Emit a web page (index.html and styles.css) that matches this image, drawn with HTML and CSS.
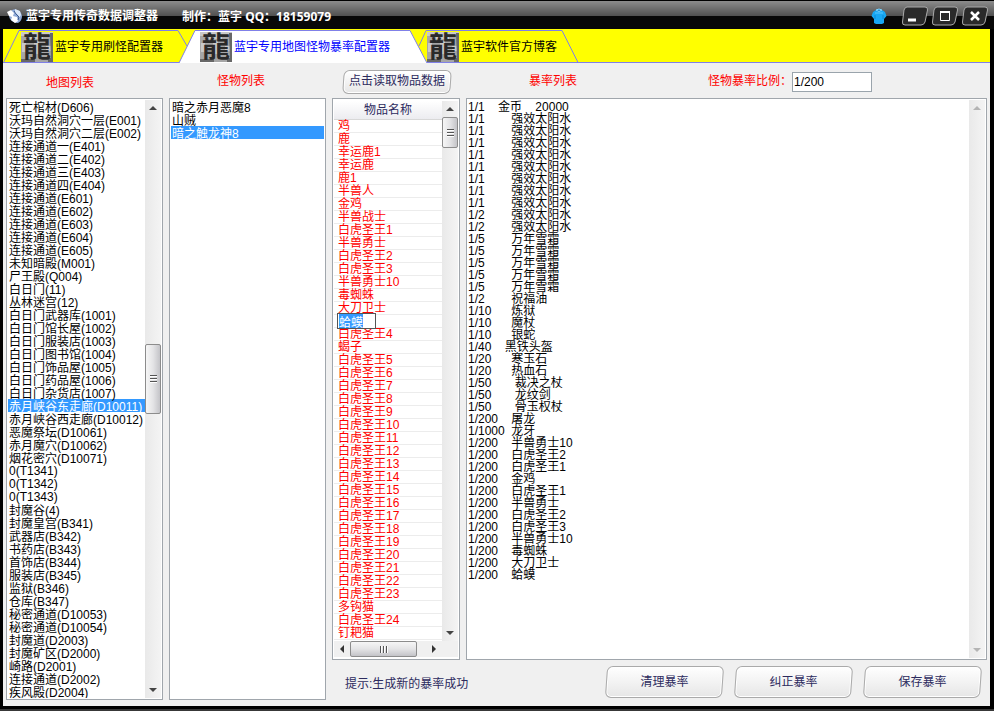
FILE: index.html
```html
<!DOCTYPE html>
<html lang="zh-CN">
<head>
    <meta charset="UTF-8">
    <title>蓝宇专用传奇数据调整器</title>
    <link rel="stylesheet" href="styles.css">
</head>
<body>
    <!-- Title bar -->
    <header class="titlebar">
        <svg class="app-icon" width="16" height="16" viewBox="0 0 16 16">
            <path d="M3 4Q6 0 10 2Q14 3 15 8Q15 13 11 15Q6 15 3 11Q1 7 3 4Z" fill="#8fa9d6"/>
            <path d="M0 4L4 2L7 5L6 8L10 9L11 13L8 15L4 12L5 9L2 8Z" fill="#fff"/>
            <path d="M8 1L13 3L14 7L12 10L11 7L8 5Z" fill="#dce8f8"/>
            <path d="M7 3L9 6L12 9L11 12" fill="none" stroke="#38588f"/>
        </svg>
        <h1>蓝宇专用传奇数据调整器</h1>
        <span class="author">制作：蓝宇 QQ：18159079</span>
        <div class="window-buttons">
            <button class="skin" aria-label="换肤">
                <svg width="16" height="17" viewBox="0 0 16 17">
                    <path d="M5 2H11L14 4L15.500 8L13 11V15L11 16H5L3 15V11L0.500 8L2 4Z" fill="#18a8f4"/>
                    <path d="M5 2Q8 0 11 2Q8 5 5 2Z" fill="#0b78c0" stroke="#7fd6ff"/>
                    <path d="M4 7V11M12 7V11" stroke="#0b88d4"/>
                    <path d="M4 5H12" stroke="#5cc8ff"/>
                </svg>
            </button>
            <button class="win" aria-label="最小化">
                <svg width="28" height="20" viewBox="0 0 28 20">
                    <path d="M6 1H24Q27 1 26.500 4L24 16Q23 19 20 19H4Q1 19 1.500 16L3 4Q4 1 6 1Z" fill="#2a2a2a" stroke="#aaa"/>
                    <path d="M7 14H15" stroke="#fff" stroke-width="3"/>
                </svg>
            </button>
            <button class="win" aria-label="最大化">
                <svg width="28" height="20" viewBox="0 0 28 20">
                    <path d="M6 1H24Q27 1 26.500 4L24 16Q23 19 20 19H4Q1 19 1.500 16L3 4Q4 1 6 1Z" fill="#2a2a2a" stroke="#aaa"/>
                    <path d="M9.500 5.500H18.500V14.500H9.500Z" fill="none" stroke="#fff"/>
                    <path d="M9 6H19" stroke="#fff" stroke-width="2"/>
                </svg>
            </button>
            <button class="win" aria-label="关闭">
                <svg width="28" height="20" viewBox="0 0 28 20">
                    <path d="M6 1H24Q27 1 26.500 4L24 16Q23 19 20 19H4Q1 19 1.500 16L3 4Q4 1 6 1Z" fill="#2a2a2a" stroke="#aaa"/>
                    <path d="M10 6L18 14M18 6L10 14" stroke="#fff" stroke-width="2.500"/>
                </svg>
            </button>
        </div>
    </header>

    <div class="window">
        <!-- Tabs -->
        <nav class="tabs">
            <svg class="tab-shapes" width="600" height="34" viewBox="0 0 600 34">
                <path d="M0.500 33.500L16 1.500H175L184 17" fill="none" stroke="#8080e8"/>
                <path d="M416 17L423 1.500H559L575 33.500" fill="none" stroke="#8080e8"/>
                <path d="M176 34L192 1.500H407L424 34Z" fill="#fff"/>
                <path d="M176 34L192 1.500H407L424 34" fill="none" stroke="#8080e8"/>
            </svg>
            <button class="tab">
                <svg class="dragon" width="32" height="30" viewBox="0 0 32 30">
                    <rect width="32" height="30" fill="#a6a6a6"/>
                    <path d="M0 0H32V3H22V7H9V4H0ZM1 11H5V20H1ZM13 9H18V22H13ZM25 14H31V19H25Z" fill="#c9c9c9"/>
                    <path d="M29 1H32V30H27V26H30ZM0 27H14V30H0Z" fill="#686868"/>
                    <text x="2" y="25" class="dragon-text">龍</text>
                </svg>
                <span>蓝宇专用刷怪配置器</span>
            </button>
            <button class="tab active">
                <svg class="dragon" width="32" height="30" viewBox="0 0 32 30">
                    <rect width="32" height="30" fill="#a6a6a6"/>
                    <path d="M0 0H32V3H22V7H9V4H0ZM1 11H5V20H1ZM13 9H18V22H13ZM25 14H31V19H25Z" fill="#c9c9c9"/>
                    <path d="M29 1H32V30H27V26H30ZM0 27H14V30H0Z" fill="#686868"/>
                    <text x="2" y="25" class="dragon-text">龍</text>
                </svg>
                <span>蓝宇专用地图怪物暴率配置器</span>
            </button>
            <button class="tab">
                <svg class="dragon" width="32" height="30" viewBox="0 0 32 30">
                    <rect width="32" height="30" fill="#a6a6a6"/>
                    <path d="M0 0H32V3H22V7H9V4H0ZM1 11H5V20H1ZM13 9H18V22H13ZM25 14H31V19H25Z" fill="#c9c9c9"/>
                    <path d="M29 1H32V30H27V26H30ZM0 27H14V30H0Z" fill="#686868"/>
                    <text x="2" y="25" class="dragon-text">龍</text>
                </svg>
                <span>蓝宇软件官方博客</span>
            </button>
        </nav>

        <main class="content">
            <!-- Map list -->
            <section class="column">
                <label class="heading map-heading" for="maps">地图列表</label>
                <div class="box">
                    <select id="maps" class="list" size="46">
                        <option>死亡棺材(D606)</option>
                        <option>沃玛自然洞穴一层(E001)</option>
                        <option>沃玛自然洞穴二层(E002)</option>
                        <option>连接通道一(E401)</option>
                        <option>连接通道二(E402)</option>
                        <option>连接通道三(E403)</option>
                        <option>连接通道四(E404)</option>
                        <option>连接通道(E601)</option>
                        <option>连接通道(E602)</option>
                        <option>连接通道(E603)</option>
                        <option>连接通道(E604)</option>
                        <option>连接通道(E605)</option>
                        <option>未知暗殿(M001)</option>
                        <option>尸王殿(Q004)</option>
                        <option>白日门(11)</option>
                        <option>丛林迷宫(12)</option>
                        <option>白日门武器库(1001)</option>
                        <option>白日门馆长屋(1002)</option>
                        <option>白日门服装店(1003)</option>
                        <option>白日门图书馆(1004)</option>
                        <option>白日门饰品屋(1005)</option>
                        <option>白日门药品屋(1006)</option>
                        <option>白日门杂货店(1007)</option>
                        <option selected>赤月峡谷东走廊(D10011)</option>
                        <option>赤月峡谷西走廊(D10012)</option>
                        <option>恶魔祭坛(D10061)</option>
                        <option>赤月魔穴(D10062)</option>
                        <option>烟花密穴(D10071)</option>
                        <option>0(T1341)</option>
                        <option>0(T1342)</option>
                        <option>0(T1343)</option>
                        <option>封魔谷(4)</option>
                        <option>封魔皇宫(B341)</option>
                        <option>武器店(B342)</option>
                        <option>书药店(B343)</option>
                        <option>首饰店(B344)</option>
                        <option>服装店(B345)</option>
                        <option>监狱(B346)</option>
                        <option>仓库(B347)</option>
                        <option>秘密通道(D10053)</option>
                        <option>秘密通道(D10054)</option>
                        <option>封魔道(D2003)</option>
                        <option>封魔矿区(D2000)</option>
                        <option>崎路(D2001)</option>
                        <option>连接通道(D2002)</option>
                        <option>疾风殿(D2004)</option>
                    </select>
                    <div class="scrollbar map-scroll">
                        <span class="arrow up"></span>
                        <span></span>
                        <span class="thumb"></span>
                        <span></span>
                        <span class="arrow down"></span>
                    </div>
                </div>
            </section>

            <!-- Monster list -->
            <section class="column">
                <label class="heading" for="monsters">怪物列表</label>
                <div class="box">
                    <select id="monsters" class="list" size="46">
                        <option>暗之赤月恶魔8</option>
                        <option>山贼</option>
                        <option selected>暗之触龙神8</option>
                    </select>
                </div>
            </section>

            <section class="editor">
                <div class="toolbar">
                    <button class="btn read">点击读取物品数据</button>
                    <label class="rate-title" for="rates">暴率列表</label>
                    <label class="ratio-label" for="ratio">怪物暴率比例：</label>
                    <input type="text" id="ratio" class="ratio" value="1/200">
                </div>

                <div class="panels">
                    <!-- Item names -->
                    <div class="box items">
                        <div class="table-wrap">
                            <table>
                                <thead>
                                    <tr><th>物品名称</th></tr>
                                </thead>
                                <tbody>
                                    <tr><td>鸡</td></tr>
                                    <tr><td>鹿</td></tr>
                                    <tr><td>幸运鹿1</td></tr>
                                    <tr><td>幸运鹿</td></tr>
                                    <tr><td>鹿1</td></tr>
                                    <tr><td>半兽人</td></tr>
                                    <tr><td>金鸡</td></tr>
                                    <tr><td>半兽战士</td></tr>
                                    <tr><td>白虎圣王1</td></tr>
                                    <tr><td>半兽勇士</td></tr>
                                    <tr><td>白虎圣王2</td></tr>
                                    <tr><td>白虎圣王3</td></tr>
                                    <tr><td>半兽勇士10</td></tr>
                                    <tr><td>毒蜘蛛</td></tr>
                                    <tr><td>大刀卫士</td></tr>
                                    <tr><td class="editing"><input type="text" id="item-edit" aria-label="物品名称" value="蛤蟆"></td></tr>
                                    <tr><td>白虎圣王4</td></tr>
                                    <tr><td>蝎子</td></tr>
                                    <tr><td>白虎圣王5</td></tr>
                                    <tr><td>白虎圣王6</td></tr>
                                    <tr><td>白虎圣王7</td></tr>
                                    <tr><td>白虎圣王8</td></tr>
                                    <tr><td>白虎圣王9</td></tr>
                                    <tr><td>白虎圣王10</td></tr>
                                    <tr><td>白虎圣王11</td></tr>
                                    <tr><td>白虎圣王12</td></tr>
                                    <tr><td>白虎圣王13</td></tr>
                                    <tr><td>白虎圣王14</td></tr>
                                    <tr><td>白虎圣王15</td></tr>
                                    <tr><td>白虎圣王16</td></tr>
                                    <tr><td>白虎圣王17</td></tr>
                                    <tr><td>白虎圣王18</td></tr>
                                    <tr><td>白虎圣王19</td></tr>
                                    <tr><td>白虎圣王20</td></tr>
                                    <tr><td>白虎圣王21</td></tr>
                                    <tr><td>白虎圣王22</td></tr>
                                    <tr><td>白虎圣王23</td></tr>
                                    <tr><td>多钩猫</td></tr>
                                    <tr><td>白虎圣王24</td></tr>
                                    <tr><td>钉耙猫</td></tr>
                                </tbody>
                            </table>
                        </div>
                        <div class="scrollbar item-scroll">
                            <span class="arrow up"></span>
                            <span class="thumb"></span>
                            <span></span>
                            <span class="arrow down"></span>
                        </div>
                        <div class="scrollbar horizontal">
                            <span class="arrow left"></span>
                            <span class="thumb"></span>
                            <span></span>
                            <span class="arrow right"></span>
                        </div>
                        <div class="corner"></div>
                    </div>

                    <!-- Drop rates -->
                    <div class="box rates">
                        <textarea id="rates" spellcheck="false">1/1    金币    20000
1/1        强效太阳水
1/1        强效太阳水
1/1        强效太阳水
1/1        强效太阳水
1/1        强效太阳水
1/1        强效太阳水
1/1        强效太阳水
1/1        强效太阳水
1/2        强效太阳水
1/2        强效太阳水
1/5        万年雪霜
1/5        万年雪霜
1/5        万年雪霜
1/5        万年雪霜
1/5        万年雪霜
1/2        祝福油
1/10      炼狱
1/10      魔杖
1/10      银蛇
1/40    黑铁头盔
1/20      寒玉石
1/20      热血石
1/50       裁决之杖
1/50       龙纹剑
1/50       骨玉权杖
1/200    屠龙
1/1000  龙牙
1/200    半兽勇士10
1/200    白虎圣王2
1/200    白虎圣王1
1/200    金鸡
1/200    白虎圣王1
1/200    半兽勇士
1/200    白虎圣王2
1/200    白虎圣王3
1/200    半兽勇士10
1/200    毒蜘蛛
1/200    大刀卫士
1/200    蛤蟆</textarea>
                        <div class="scrollbar rate-scroll disabled">
                            <span class="arrow up"></span>
                            <span></span>
                            <span class="arrow down"></span>
                        </div>
                    </div>
                </div>

                <div class="actions">
                    <p class="tip">提示:生成新的暴率成功</p>
                    <button class="btn">清理暴率</button>
                    <button class="btn">纠正暴率</button>
                    <button class="btn">保存暴率</button>
                </div>
            </section>
        </main>
    </div>

    <script>
        // the edited cell opens with its name selected
        const edit = document.getElementById("item-edit");
        edit.focus({ preventScroll: true });
        edit.select();
    </script>
</body>
</html>
```
FILE: styles.css
```css
* {
    box-sizing: border-box;
}

body {
    margin: 0;
    height: 100vh;
    display: flex;
    flex-direction: column;
    background: #000;
    border-bottom: 2px solid #383838;
    overflow: hidden;
}

body, button, input, select, textarea {
    font-family: "Liberation Sans", "Noto Sans CJK SC", sans-serif;
    font-size: 12px;
    line-height: 13px;
}

button {
    border: none;
    background: none;
    padding: 0;
    cursor: pointer;
}

svg {
    display: block;
    flex: none;
}

/* Title bar */
.titlebar {
    height: 29px;
    flex: none;
    display: flex;
    align-items: center;
    padding: 2px 5px 0 7px;
    color: #fff;
    font-weight: bold;
    border-top: 1px solid #000;
    background: linear-gradient(#8c8c8c, #505050 15px, #080808 15px, #080808);
}

.titlebar h1 {
    margin: 0 24px 0 3px;
    font-size: 12px;
}

.author {
    font-family: "Noto Sans", "Noto Sans CJK TC", sans-serif;
}

.window-buttons {
    margin-left: auto;
    display: flex;
    align-items: center;
    gap: 2px;
}

.skin {
    margin-right: 12px;
}

/* Window body */
.window {
    flex: 1;
    min-height: 0;
    display: flex;
    flex-direction: column;
    margin: 0 4px 3px 3px;
    background: #f0f0f0;
}

.tabs {
    position: relative;
    height: 34px;
    flex: none;
    display: flex;
    gap: 37px;
    padding: 3px 0 0 18px;
    background: #ff0;
    border-bottom: 1px solid #8080e8;
}

.tab-shapes {
    position: absolute;
    left: 0;
    top: 0;
}

.tab {
    position: relative;
    display: flex;
    align-items: center;
    gap: 2px;
    color: #000;
}

.tab.active {
    color: #00f;
}

.dragon {
    overflow: visible;
}

.dragon-text {
    font-family: "Noto Sans CJK TC", sans-serif;
    font-size: 28px;
    font-weight: bold;
    fill: #2a2a2a;
}

.content {
    flex: 1;
    min-height: 0;
    display: flex;
    gap: 6px;
    padding: 0 3px 6px;
}

.column {
    width: 157px;
    flex: none;
    display: flex;
    flex-direction: column;
}

.heading {
    height: 35px;
    padding: 12px 0 0 48px;
    color: #f00;
}

.map-heading {
    padding: 14px 0 0 40px;
}

.box {
    flex: 1;
    min-height: 0;
    display: flex;
    padding: 1px;
    background: #fff;
    border: 1px solid #a0a6ac;
}

.list {
    flex: 1;
    min-width: 0;
    border: none;
    outline: none;
    padding: 0;
    background: #fff;
    overflow: hidden;
}

.list option {
    display: flex;
    align-items: center;
    height: 13px;
    min-height: 13px;
    padding: 0 1px;
    line-height: 13px;
    color: #000;
}

.list option:checked {
    color: #fff;
    background: #39f linear-gradient(#39f, #39f);
}

/* Scrollbars */
.scrollbar {
    display: grid;
    width: 16px;
    flex: none;
    background: linear-gradient(90deg, #e9e9e9, #f4f4f4);
}

.map-scroll {
    grid-template-rows: 16px 228fr 70px 269fr 16px;
}

.item-scroll {
    grid-template-rows: 16px 31px 1fr 16px;
}

.rate-scroll {
    grid-template-rows: 16px 1fr 16px;
}

.horizontal {
    width: auto;
    height: 16px;
    grid-template-columns: 16px 67px 1fr 16px;
    background: #f0f0f0;
}

.corner {
    background: #f0f0f0;
}

.arrow {
    display: grid;
    place-items: center;
}

.arrow::before {
    content: "";
    border: 4px solid transparent;
}

.arrow.up::before {
    border-top: none;
    border-bottom-color: #444;
}

.arrow.down::before {
    border-bottom: none;
    border-top-color: #444;
}

.arrow.left::before {
    border-left: none;
    border-right-color: #333;
}

.arrow.right::before {
    border-right: none;
    border-left-color: #333;
}

.disabled .arrow.up::before {
    border-bottom-color: #b4b4b4;
}

.disabled .arrow.down::before {
    border-top-color: #b4b4b4;
}

.thumb {
    display: grid;
    place-items: center;
    border: 1px solid #8c8c8c;
    border-radius: 2px;
    background: linear-gradient(90deg, #f6f6f6, #e4e4e6 50%, #c4c4c8);
}

.thumb::before {
    content: "";
    width: 7px;
    height: 8px;
    background: repeating-linear-gradient(#555 0 1px, #fff 1px 2px, transparent 2px 3px);
}

.horizontal .thumb {
    background: linear-gradient(#f6f6f6, #e4e4e6 50%, #c4c4c8);
}

.horizontal .thumb::before {
    width: 8px;
    height: 7px;
    background: repeating-linear-gradient(90deg, #555 0 1px, #fff 1px 2px, transparent 2px 3px);
}

/* Editor */
.editor {
    flex: 1;
    min-width: 0;
    display: flex;
    flex-direction: column;
}

.toolbar {
    height: 35px;
    flex: none;
    display: flex;
    align-items: center;
    padding: 2px 115px 0 10px;
    color: #f00;
}

.rate-title {
    margin-left: 77px;
}

.ratio-label {
    margin-left: auto;
}

.ratio {
    width: 80px;
    height: 20px;
    padding: 0 1px;
    border: 1px solid #9aa4ac;
    border-radius: 0;
}

.btn {
    position: relative;
    z-index: 0;
    width: 119px;
    height: 32px;
    color: #2d2b5e;
}

.btn::before {
    content: "";
    position: absolute;
    inset: 0 1px;
    z-index: -1;
    border: 1px solid #aaa;
    border-radius: 6px;
    background: linear-gradient(#fff, #f4f4f4 45%, #e6e6e6);
    box-shadow: inset 0 0 0 1px #fff;
    transform: skewX(-4deg);
}

.btn.read {
    width: 110px;
    height: 24px;
}

.panels {
    flex: 1;
    min-height: 0;
    display: flex;
    gap: 6px;
}

.items {
    width: 128px;
    flex: none;
    display: grid;
    grid-template-columns: 1fr 16px;
    grid-template-rows: 1fr 16px;
    padding: 2px 1px;
}

.table-wrap {
    min-height: 0;
    overflow: hidden;
}

table {
    width: 100%;
    border-collapse: separate;
    border-spacing: 0;
}

th {
    height: 19px;
    padding: 0;
    font-weight: normal;
    color: #2d2b5e;
    background: linear-gradient(#fff, #ececf0);
    border-bottom: 1px solid #d8d8d8;
}

td {
    height: 13px;
    padding: 0 0 0 4px;
    line-height: 12px;
    color: #f00;
    border-bottom: 1px solid #ececec;
}

.editing {
    padding-left: 3px;
}

.editing input {
    display: block;
    width: 39px;
    height: 16px;
    margin: -2px 0;
    padding: 0 1px;
    position: relative;
    border: 1px solid #555;
    outline: none;
}

.editing input::selection {
    color: #fff;
    background: #39f;
}

.rates {
    flex: 1;
    min-width: 0;
}

.rates textarea {
    flex: 1;
    min-width: 0;
    padding: 1px 0;
    border: none;
    outline: none;
    resize: none;
    overflow: hidden;
    line-height: 12px;
}

.actions {
    height: 40px;
    flex: none;
    display: flex;
    align-items: flex-end;
    gap: 10px;
    padding: 0 5px 2px 13px;
}

.tip {
    margin: 0 auto auto 0;
    padding-top: 18px;
    color: #2d2b5e;
}
```
